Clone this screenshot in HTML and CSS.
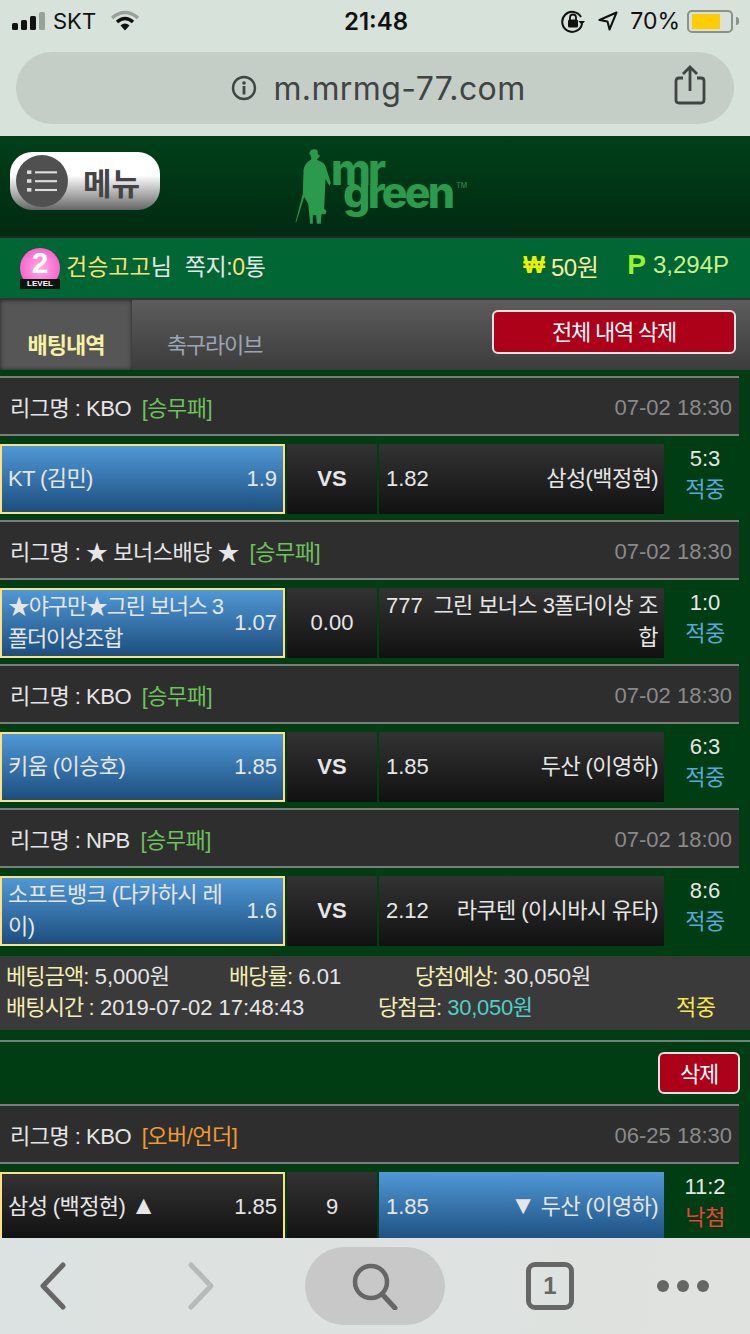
FILE: index.html
```html
<!DOCTYPE html>
<html>
<head>
  <meta charset="UTF-8">
  <title>mr green</title>
  <link rel="stylesheet" href="styles.css">
</head>
<body>
  <div class="page">
    <!-- Browser chrome -->
    <div class="chrome">
      <div class="status">
        <div class="status-left">
          <svg width="36" height="18" viewBox="0 0 36 18"><rect x="0" y="11" width="6" height="7" rx="1.5" fill="#111"/><rect x="9" y="8" width="6" height="10" rx="1.5" fill="#111"/><rect x="18" y="4" width="6" height="14" rx="1.5" fill="#111"/><rect x="27" y="0" width="6" height="18" rx="1.5" fill="#9aa09c"/></svg>
          <span class="carrier">SKT</span>
          <svg class="wifi" width="30" height="22" viewBox="0 0 30 22"><path d="M2 8 Q15 -3 28 8" fill="none" stroke="#9aa09c" stroke-width="3.5"/><path d="M7 12 Q15 5 23 12" fill="none" stroke="#111" stroke-width="3.5"/><path d="M10.5 15.5 Q15 11.5 19.5 15.5 L15 20.5 Z" fill="#111"/></svg>
        </div>
        <div class="clock">21:48</div>
        <div class="status-right">
          <svg width="24" height="24" viewBox="0 0 24 24"><path d="M20 8 A10 10 0 1 0 21 15" fill="none" stroke="#111" stroke-width="2"/><path d="M17.5 12 L24 12 L20.7 16 Z" fill="#111"/><rect x="7" y="10.5" width="10" height="8" rx="1.5" fill="#111"/><path d="M9 11 V8.5 A3 3 0 0 1 15 8.5 V11" fill="none" stroke="#111" stroke-width="1.8"/></svg>
          <svg class="arrow" width="20" height="20" viewBox="0 0 20 20"><path d="M18.5 1.5 L1.5 9 L9.5 10.5 L11.5 18.5 Z" fill="none" stroke="#111" stroke-width="2" stroke-linejoin="round"/></svg>
          <span class="percent">70%</span>
          <div class="battery"><div class="battery-fill"></div></div>
          <div class="battery-tip"></div>
        </div>
      </div>
      <div class="urlbar">
        <svg class="info-icon" width="26" height="26" viewBox="0 0 26 26"><circle cx="13" cy="13" r="11" fill="none" stroke="#404442" stroke-width="2.4"/><circle cx="13" cy="8" r="1.8" fill="#404442"/><rect x="11.6" y="11" width="2.8" height="8.5" fill="#404442"/></svg>
        <span class="url">m.mrmg-77.com</span>
        <svg class="share" width="32" height="40" viewBox="0 0 32 40"><path d="M9 13 H5 Q2 13 2 16 V35 Q2 38 5 38 H27 Q30 38 30 35 V16 Q30 13 27 13 H23" fill="none" stroke="#404442" stroke-width="2.8"/><path d="M16 26 V3 M9 9 L16 2 L23 9" fill="none" stroke="#404442" stroke-width="2.8"/></svg>
      </div>
    </div>

    <!-- Site header -->
    <div class="header">
      <a class="menu-btn">
        <span class="menu-circle">
          <svg width="30" height="24" viewBox="0 0 34 26"><g fill="#ddd"><rect x="0" y="1" width="5" height="4"/><rect x="0" y="11" width="5" height="4"/><rect x="0" y="21" width="5" height="4"/><rect x="9" y="2" width="25" height="2.4"/><rect x="9" y="12" width="25" height="2.4"/><rect x="9" y="22" width="25" height="2.4"/></g></svg>
        </span>
        <span class="menu-text">메뉴</span>
      </a>
      <div class="logo">
        <svg width="37" height="80" viewBox="40 20 110 240"><path fill="#2c9a4c" d="M90 30 Q100 24 110 30 L111 42 L118 46 L108 58 L124 66 Q134 72 138 90 L150 128 L146 136 L134 116 L130 205 L137 212 L134 222 L122 222 L120 250 L108 250 L106 225 L96 225 L96 250 L88 250 L82 190 L70 170 L46 246 L44 246 L66 160 L68 90 Q70 70 88 60 L92 56 L88 42 L84 40 Z"/></svg>
        <div class="logo-text">mr<br><span class="logo-green">green<sup>TM</sup></span></div>
      </div>
    </div>

    <!-- User bar -->
    <div class="userbar">
      <div class="user-left">
        <div class="level">
          <span class="level-num">2</span>
          <span class="level-tag">LEVEL</span>
        </div>
        <span class="nick">건승고고</span><span class="sir">님</span>
        <span class="memo">쪽지:<em>0</em>통</span>
      </div>
      <div class="user-right">
        <span class="won-sign">₩</span><span class="money">50원</span>
        <span class="point-sign">P</span><span class="point">3,294P</span>
      </div>
    </div>

    <!-- Tabs -->
    <div class="tabs">
      <div class="tab tab-on">배팅내역</div>
      <div class="tab">축구라이브</div>
      <button class="btn-red btn-all">전체 내역 삭제</button>
    </div>

    <div class="content">
      <div class="league">
        <div>리그명 : KBO <span class="type-win">[승무패]</span></div>
        <div class="time">07-02 18:30</div>
      </div>
      <div class="match">
        <div class="cell home blue picked"><span class="name">KT (김민)</span><span>1.9</span></div>
        <div class="cell mid vs">VS</div>
        <div class="cell away"><span>1.82</span><span class="name">삼성(백정현)</span></div>
        <div class="result"><span>5:3</span><span class="hit">적중</span></div>
      </div>

      <div class="league">
        <div>리그명 : ★ 보너스배당 ★ <span class="type-win">[승무패]</span></div>
        <div class="time">07-02 18:30</div>
      </div>
      <div class="match">
        <div class="cell home blue picked tight"><span class="name">★야구만★그린 보너스 3폴더이상조합</span><span>1.07</span></div>
        <div class="cell mid">0.00</div>
        <div class="cell away top"><span>777</span><span class="name">그린 보너스 3폴더이상 조합</span></div>
        <div class="result"><span>1:0</span><span class="hit">적중</span></div>
      </div>

      <div class="league">
        <div>리그명 : KBO <span class="type-win">[승무패]</span></div>
        <div class="time">07-02 18:30</div>
      </div>
      <div class="match">
        <div class="cell home blue picked"><span class="name">키움 (이승호)</span><span>1.85</span></div>
        <div class="cell mid vs">VS</div>
        <div class="cell away"><span>1.85</span><span class="name">두산 (이영하)</span></div>
        <div class="result"><span>6:3</span><span class="hit">적중</span></div>
      </div>

      <div class="league">
        <div>리그명 : NPB <span class="type-win">[승무패]</span></div>
        <div class="time">07-02 18:00</div>
      </div>
      <div class="match">
        <div class="cell home blue picked"><span class="name">소프트뱅크 (다카하시 레이)</span><span>1.6</span></div>
        <div class="cell mid vs">VS</div>
        <div class="cell away"><span>2.12</span><span class="name">라쿠텐 (이시바시 유타)</span></div>
        <div class="result"><span>8:6</span><span class="hit">적중</span></div>
      </div>

      <div class="summary">
        <div class="summary-row">
          <span class="col-a"><b>베팅금액:</b> 5,000원</span>
          <span class="col-b"><b>배당률:</b> 6.01</span>
          <span><b>당첨예상:</b> 30,050원</span>
        </div>
        <div class="summary-row">
          <span class="col-c"><b>배팅시간 :</b> 2019-07-02 17:48:43</span>
          <span class="col-d"><b>당첨금:</b> <i>30,050원</i></span>
          <span class="final">적중</span>
        </div>
      </div>

      <div class="delete-row">
        <button class="btn-red btn-del">삭제</button>
      </div>

      <div class="league">
        <div>리그명 : KBO <span class="type-over">[오버/언더]</span></div>
        <div class="time">06-25 18:30</div>
      </div>
      <div class="match">
        <div class="cell home picked"><span class="name">삼성 (백정현) <span class="mark">▲</span></span><span>1.85</span></div>
        <div class="cell mid">9</div>
        <div class="cell away blue"><span>1.85</span><span class="name"><span class="mark">▼</span> 두산 (이영하)</span></div>
        <div class="result"><span>11:2</span><span class="miss">낙첨</span></div>
      </div>
    </div>

    <!-- Browser toolbar, sits over the page -->
    <div class="toolbar">
      <svg class="tool-back" width="28" height="48" viewBox="0 0 28 48"><path d="M24 3 L4 24 L24 45" fill="none" stroke="#666" stroke-width="5" stroke-linecap="round" stroke-linejoin="round"/></svg>
      <svg class="tool-next" width="28" height="48" viewBox="0 0 28 48"><path d="M4 3 L24 24 L4 45" fill="none" stroke="#b6bab9" stroke-width="5" stroke-linecap="round" stroke-linejoin="round"/></svg>
      <div class="tool-search">
        <svg width="48" height="48" viewBox="0 0 48 48"><circle cx="20" cy="20" r="16" fill="none" stroke="#666" stroke-width="4.5"/><path d="M31 32 L44 46" stroke="#666" stroke-width="5" stroke-linecap="round"/></svg>
      </div>
      <div class="tool-tabs">1</div>
      <div class="tool-more"><span></span><span></span><span></span></div>
    </div>
  </div>
</body>
</html>
```

FILE: styles.css
```css
* {
  box-sizing: border-box;
}
body {
  margin: 0;
  font-family: "Liberation Sans", "Noto Sans CJK KR", sans-serif;
  background-color: #003d12;
  color: #e6e6e6;
}
.page {
  position: relative;
  width: 750px;
  height: 1334px;
  overflow: hidden;
}

/* Browser chrome */
.chrome {
  height: 136px;
  background-color: #d6e2da;
  padding-top: 7px;
}
.status {
  display: flex;
  justify-content: space-between;
  align-items: center;
  height: 28px;
  padding: 0 11px 0 12px;
  color: #111;
  font-family: Inter, "Liberation Sans", sans-serif;
  font-size: 22px;
  position: relative;
}
.status-left, .status-right {
  display: flex;
  align-items: center;
}
.carrier {
  margin-left: 5px;
}
.wifi {
  margin-left: 14px;
}
.clock {
  position: absolute;
  left: 2px;
  right: 0;
  text-align: center;
  font-size: 24px;
  font-weight: 600;
  pointer-events: none;
}
.arrow {
  margin-left: 13px;
}
.percent {
  margin-left: 12px;
  font-size: 23px;
}
.battery {
  width: 46px;
  height: 23px;
  margin-left: 7px;
  border: 2px solid #8b918d;
  border-radius: 5px;
  padding: 2px;
}
.battery-fill {
  width: 28px;
  height: 15px;
  background-color: #ffcc00;
  margin-left: 1px;
}
.battery-tip {
  width: 3px;
  height: 8px;
  margin-left: 3px;
  background-color: #8b918d;
  border-radius: 0 3px 3px 0;
}
.urlbar {
  position: relative;
  display: flex;
  align-items: center;
  justify-content: center;
  height: 72px;
  margin: 17px 16px 0;
  padding-left: 7px;
  border-radius: 36px;
  background-color: #c4cdc6;
}
.info-icon {
  margin-right: 16px;
}
.url {
  font-family: Inter, "Liberation Sans", sans-serif;
  font-size: 32px;
  letter-spacing: 0.4px;
  color: #404442;
}
.share {
  position: absolute;
  right: 28px;
  top: 13px;
}

/* Site header */
.header {
  display: flex;
  height: 102px;
  padding: 16px 0 0 10px;
  background: linear-gradient(#004018, #002a12);
  border-bottom: 2px solid #262626;
}
.menu-btn {
  display: flex;
  align-items: center;
  width: 150px;
  height: 58px;
  padding-left: 6px;
  border-radius: 22px;
  background: linear-gradient(#fff 40%, #666);
}
.menu-circle {
  display: flex;
  align-items: center;
  justify-content: center;
  width: 52px;
  height: 52px;
  border-radius: 50%;
  background-color: #505050;
}
.menu-text {
  margin-left: 15px;
  font-size: 31px;
  font-weight: bold;
  color: #444;
}
.logo {
  display: flex;
  margin: -5px 0 0 134px;
  color: #2c9a4c;
}
.logo-text {
  margin-left: 0;
  padding-top: 11px;
  font-family: Inter, "Liberation Sans", sans-serif;
  font-weight: 800;
  font-size: 43px;
  letter-spacing: -2.8px;
  line-height: 23px;
}
.logo-green {
  display: inline-block;
  margin-left: 12px;
}
.logo-green sup {
  font-size: 7px;
  letter-spacing: 0;
  font-weight: normal;
  vertical-align: 20px;
  line-height: 0;
  margin-left: 4px;
}

/* User bar */
.userbar {
  display: flex;
  justify-content: space-between;
  align-items: center;
  height: 60px;
  padding: 0 21px 6px 20px;
  background-color: #006633;
  font-size: 23px;
}
.user-left, .user-right {
  display: flex;
  align-items: center;
}
.level {
  position: relative;
  width: 40px;
  height: 40px;
  margin: 6px 6px 0 0;
  border-radius: 50%;
  background: radial-gradient(#ffb0e6, #f745c0);
  text-align: center;
}
.level-num {
  display: block;
  height: 30px;
  font-family: "Liberation Sans", sans-serif;
  font-size: 30px;
  font-weight: bold;
  line-height: 30px;
  color: #fff;
}
.level-tag {
  position: absolute;
  left: 0;
  bottom: -1px;
  width: 40px;
  height: 10px;
  background-color: #111;
  font-size: 8px;
  font-weight: bold;
  line-height: 10px;
  color: #fff;
}
.nick {
  color: #ffdf73;
}
.memo {
  margin-left: 13px;
  letter-spacing: -0.4px;
}
.memo em {
  font-style: normal;
  color: #ffdf73;
}
.won-sign {
  font-size: 23px;
  font-weight: bold;
  letter-spacing: -1px;
  color: #eef000;
  margin-right: 7px;
}
.money {
  font-size: 24px;
  letter-spacing: -0.5px;
  color: #ffe9a0;
}
.point-sign {
  margin-left: 29px;
  margin-right: 7px;
  font-size: 28px;
  font-weight: bold;
  color: #9cf22e;
}
.point {
  font-size: 24px;
  color: #c8f08a;
}

/* Tabs */
.tabs {
  position: relative;
  display: flex;
  height: 72px;
  border-top: 2px solid #333;
  background: linear-gradient(#5c5c5c, #3c3c3c);
  color: #9aa5b5;
  font-size: 22px;
}
.tab {
  padding: 27px 35px 0;
  letter-spacing: -1.2px;
}
.tab-on {
  width: 132px;
  padding: 27px 0 0;
  text-align: center;
  font-weight: bold;
  letter-spacing: -1px;
  color: #f6f2a4;
  background: #565656;
  box-shadow: inset 0 0 4px #222;
}
.btn-red {
  border: 2px solid #e4e4e4;
  border-radius: 6px;
  background-color: #ad0019;
  color: #fff;
  font-family: inherit;
  font-size: 22px;
  letter-spacing: -1.2px;
}
.btn-all {
  position: absolute;
  top: 10px;
  right: 14px;
  width: 244px;
  height: 44px;
  padding: 0 0 5px;
}

/* Betting list */
.content {
  width: 739px;
  padding-top: 6px;
  font-size: 22px;
}
.league {
  display: flex;
  justify-content: space-between;
  align-items: center;
  height: 60px;
  padding: 0 7px 0 10px;
  background-color: #2e2e2e;
  border-top: 2px solid #7c7c7c;
  border-bottom: 2px solid #7c7c7c;
  letter-spacing: -0.5px;
}
.type-win {
  margin-left: 5px;
  color: #6cc25a;
}
.type-over {
  margin-left: 5px;
  color: #f09a30;
}
.time {
  padding-top: 3px;
  letter-spacing: 0;
  color: #8a8a8a;
}
.match {
  display: flex;
  height: 70px;
  margin: 8px 0 6px;
}
.cell {
  display: flex;
  justify-content: space-between;
  align-items: center;
  background: linear-gradient(#333, #111);
  line-height: 32px;
}
.name {
  letter-spacing: -0.6px;
  word-break: break-all;
}
.mark {
  font-size: 26px;
  line-height: 1;
}
.home {
  width: 285px;
  padding: 0 6px;
  gap: 9px;
}
.tight {
  gap: 3px;
}
.tight .name {
  letter-spacing: -1.2px;
}
.away {
  width: 285px;
  padding: 0 6px 0 7px;
  gap: 10px;
}
.away .name {
  text-align: right;
}
.top {
  align-items: flex-start;
  padding-top: 2px;
}
.picked {
  border: 2px solid #ffe082;
}
.blue {
  background: linear-gradient(#5098d6, #1c4e7e);
}
.mid {
  width: 90px;
  margin: 0 2px;
  justify-content: center;
}
.vs {
  font-size: 22px;
  font-weight: bold;
}
.result {
  display: flex;
  flex-direction: column;
  align-items: center;
  width: 75px;
  margin-top: -1px;
  padding-left: 7px;
  line-height: 31px;
}
.hit {
  letter-spacing: -0.6px;
  color: #58a8dc;
}
.miss {
  letter-spacing: -0.6px;
  color: #f04038;
}
.summary {
  width: 750px;
  height: 74px;
  margin-top: 10px;
  padding: 5px 0 0 6px;
  background-color: #3a3a3a;
  line-height: 31px;
}
.summary b {
  font-weight: normal;
  letter-spacing: -0.9px;
  color: #f4eeb0;
}
.summary i {
  font-style: normal;
  letter-spacing: -0.3px;
  color: #4ed0c8;
}
.summary-row {
  display: flex;
}
.col-a {
  width: 223px;
}
.col-b {
  width: 186px;
}
.col-c {
  width: 372px;
}
.col-d {
  width: 298px;
}
.final {
  letter-spacing: -0.6px;
  color: #f6e84a;
}
.delete-row {
  display: flex;
  justify-content: flex-end;
  height: 64px;
  margin-top: 10px;
  padding-top: 10px;
  border-top: 2px solid #7c7c7c;
  width: 750px;
  padding-right: 10px;
}
.btn-del {
  width: 82px;
  height: 42px;
  padding: 0 0 3px;
}

/* Browser toolbar */
.toolbar {
  position: absolute;
  left: 0;
  right: 0;
  bottom: 0;
  display: flex;
  align-items: center;
  height: 96px;
  padding-left: 39px;
  background: linear-gradient(100deg, #dce2e1, #dfe2df);
}
.tool-next {
  margin-left: 120px;
}
.tool-search {
  display: flex;
  align-items: center;
  justify-content: center;
  width: 140px;
  height: 78px;
  margin-left: 90px;
  border-radius: 39px;
  background-color: #c8c8c8;
}
.tool-tabs {
  width: 48px;
  height: 48px;
  margin-left: 81px;
  border: 5px solid #666;
  border-radius: 9px;
  text-align: center;
  font-size: 24px;
  font-weight: bold;
  line-height: 38px;
  color: #666;
}
.tool-more {
  display: flex;
  gap: 8px;
  margin-left: 83px;
}
.tool-more span {
  width: 12px;
  height: 12px;
  border-radius: 50%;
  background-color: #666;
}
```
